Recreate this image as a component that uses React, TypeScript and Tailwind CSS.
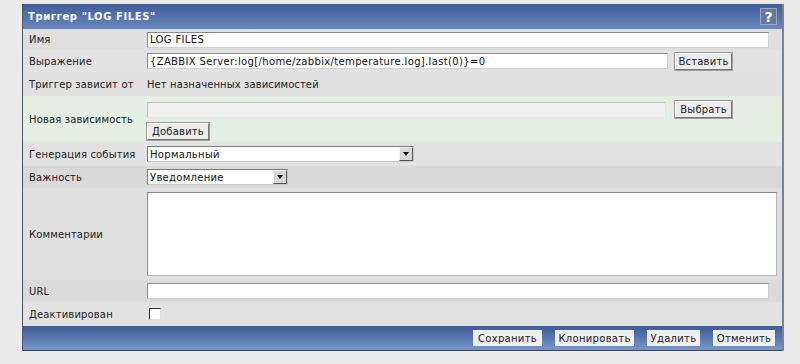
import React from "react";

const font = { fontFamily: '"DejaVu Sans", Verdana, sans-serif' };

function Btn({ children, className = "" }: { children: React.ReactNode; className?: string }) {
  return (
    <div
      className={
        "flex items-center justify-center h-[17px] px-[6px] text-[10px] tracking-[0.2px] text-[#222] bg-[#ececec] border border-t-[#fff] border-l-[#fff] border-r-[#777] border-b-[#777] shadow-[0_0_0_1px_#9a9a9a] " +
        className
      }
    >
      {children}
    </div>
  );
}

function Input({ w, value = "", disabled = false }: { w: string; value?: string; disabled?: boolean }) {
  return (
    <div
      className={
        "h-[16px] flex items-center px-[2px] text-[10px] tracking-[0.35px] text-[#111] border whitespace-nowrap overflow-hidden " +
        (disabled
          ? "bg-[#efefef] border-t-[#c4c4c4] border-l-[#c4c4c4] border-r-[#e4e4e4] border-b-[#e4e4e4] "
          : "bg-white border-t-[#8a8a8a] border-l-[#8a8a8a] border-r-[#cfcfcf] border-b-[#cfcfcf] ") +
        w
      }
    >
      {value}
    </div>
  );
}

function Select({ w, value }: { w: string; value: string }) {
  return (
    <div
      className={
        "h-[16px] flex items-center bg-white border border-t-[#7a7a7a] border-l-[#7a7a7a] border-r-[#c8c8c8] border-b-[#c8c8c8] " + w
      }
    >
      <div className="flex-1 px-[2px] text-[10px] tracking-[0.3px] text-[#111]">{value}</div>
      <div className="w-[14px] h-[14px] bg-[#d8d8d8] border border-t-[#f4f4f4] border-l-[#f4f4f4] border-r-[#555] border-b-[#555] flex items-center justify-center">
        <svg width="6" height="4" viewBox="0 0 6 4">
          <path d="M0 0 H6 L3 4 Z" fill="#111" />
        </svg>
      </div>
    </div>
  );
}

function Row({
  label,
  h,
  bg,
  children,
}: {
  label: string;
  h: string;
  bg: string;
  children?: React.ReactNode;
}) {
  return (
    <div className={"flex " + h + " " + bg}>
      <div className="w-[120px] flex items-center pl-[6px] text-[10px] tracking-[0.15px] text-[#222] shrink-0">{label}</div>
      <div className="flex-1 flex items-center pl-[4px]">{children}</div>
    </div>
  );
}

function FootBtn({ children, w }: { children: React.ReactNode; w: string }) {
  return (
    <div className={"h-[16px] flex items-center justify-center bg-[#efefef] text-[10px] tracking-[0.3px] text-[#222] " + w}>
      {children}
    </div>
  );
}

export default function App() {
  return (
    <div className="w-[800px] h-[364px] bg-[#ebebeb] pt-[4px]" style={font}>
      <div className="ml-[22px] w-[762px] border-l border-l-[#4c5566] border-r-2 border-r-[#7c8390]">
        {/* header */}
        <div className="h-[25px] flex items-center justify-between pl-[5px] pr-[5px] bg-gradient-to-b from-[#3f5d98] to-[#6a88bf]">
          <div className="text-white font-bold text-[10px] tracking-[0.6px]">Триггер "LOG FILES"</div>
          <div className="w-[17px] h-[17px] bg-[#66779a] border border-[#9aa8c2] flex items-center justify-center text-white font-bold text-[14px] leading-none">
            ?
          </div>
        </div>
        <Row label="Имя" h="h-[21px]" bg="bg-[#dedede]">
          <Input w="w-[622px]" value="LOG FILES" />
        </Row>
        <Row label="Выражение" h="h-[22px]" bg="bg-[#e2e2e2]">
          <Input w="w-[521px]" value="{ZABBIX Server:log[/home/zabbix/temperature.log].last(0)}=0" />
          <Btn className="ml-[7px] w-[57px]">Вставить</Btn>
        </Row>
        <Row label="Триггер зависит от" h="h-[24px]" bg="bg-[#e0e0e0]">
          <div className="text-[10px] tracking-[0.1px] text-[#222]">Нет назначенных зависимостей</div>
        </Row>
        <div className="flex h-[46px] bg-[#e2efe2]">
          <div className="w-[120px] flex items-center pl-[6px] text-[10px] tracking-[0.15px] text-[#222] shrink-0">Новая зависимость</div>
          <div className="flex-1 pl-[4px] pt-[5px] flex flex-col gap-[5px]">
            <div className="flex items-center">
              <Input w="w-[519px]" disabled />
              <Btn className="ml-[9px] w-[57px]">Выбрать</Btn>
            </div>
            <Btn className="w-[62px]">Добавить</Btn>
          </div>
        </div>
        <Row label="Генерация события" h="h-[24px]" bg="bg-[#e2e2e2]">
          <Select w="w-[267px]" value="Нормальный" />
        </Row>
        <Row label="Важность" h="h-[22px]" bg="bg-[#d9d9d9]">
          <Select w="w-[141px]" value="Уведомление" />
        </Row>
        <Row label="Комментарии" h="h-[92px]" bg="bg-[#dfdfdf]">
          <div className="w-[630px] h-[84px] bg-white border border-t-[#8a8a8a] border-l-[#8a8a8a] border-r-[#b8b8b8] border-b-[#b8b8b8]" />
        </Row>
        <Row label="URL" h="h-[22px]" bg="bg-[#dadada]">
          <Input w="w-[622px]" />
        </Row>
        <Row label="Деактивирован" h="h-[24px]" bg="bg-[#e2e2e2]">
          <div className="ml-[2px] w-[12px] h-[12px] bg-white border border-t-[#333] border-l-[#333] border-r-[#ddd] border-b-[#ddd]" />
        </Row>
        {/* footer */}
        <div className="h-[25px] flex items-center justify-end gap-[13px] pr-[7px] bg-gradient-to-b from-[#3e5b97] to-[#7796c8] border-b border-b-[#3a4660]">
          <FootBtn w="w-[69px]">Сохранить</FootBtn>
          <FootBtn w="w-[79px]">Клонировать</FootBtn>
          <FootBtn w="w-[53px]">Удалить</FootBtn>
          <FootBtn w="w-[62px]">Отменить</FootBtn>
        </div>
      </div>
    </div>
  );
}
